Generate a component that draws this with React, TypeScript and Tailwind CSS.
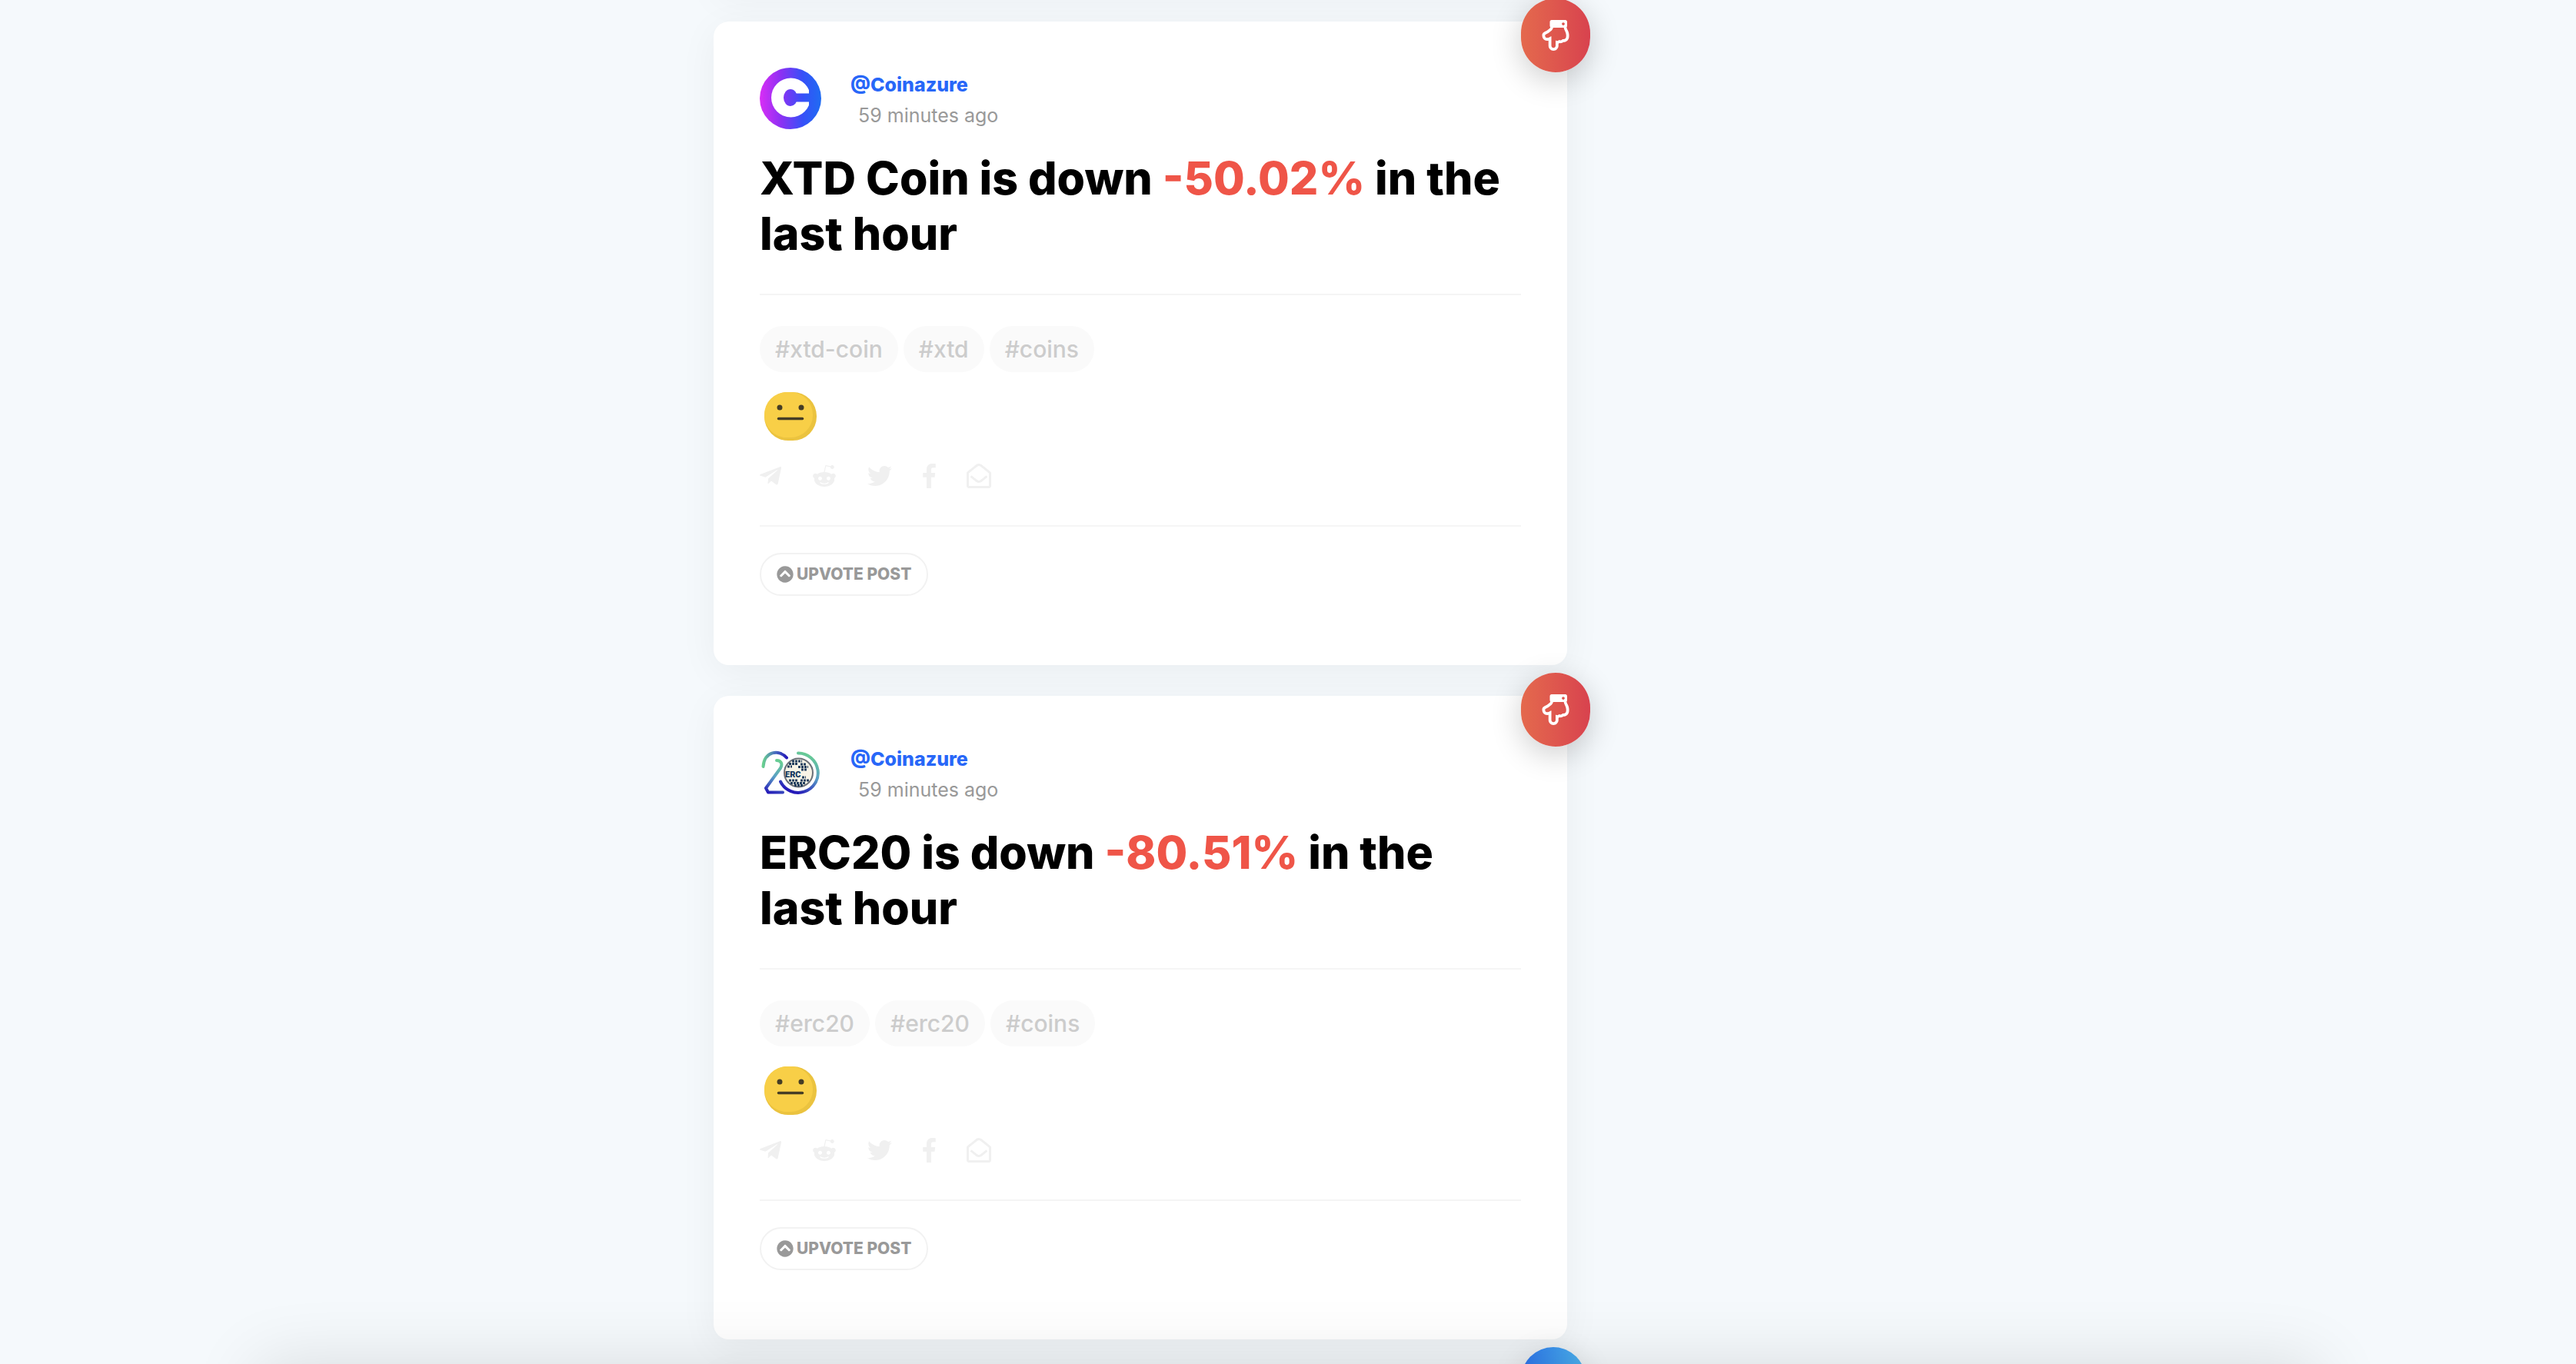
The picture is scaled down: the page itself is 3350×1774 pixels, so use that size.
import { FaChevronCircleUp, FaRedditAlien, FaRegEnvelopeOpen, FaRegHandPointDown, FaTelegramPlane, FaTwitter } from "react-icons/fa";

interface Post {
  id: number;
  coin: string;
  change: string;
  tags: string[];
  logo: "xtd" | "erc20";
}

const posts: Post[] = [
  { id: 1, coin: "XTD Coin", change: "-50.02%", tags: ["#xtd-coin", "#xtd", "#coins"], logo: "xtd" },
  { id: 2, coin: "ERC20", change: "-80.51%", tags: ["#erc20", "#erc20", "#coins"], logo: "erc20" },
];

function XtdLogo() {
  return (
    <svg className="size-20" viewBox="0 0 80 80" aria-hidden="true">
      <defs>
        <linearGradient id="xtd" gradientUnits="userSpaceOnUse" x1="0" y1="0" x2="80" y2="0">
          <stop offset="0" stopColor="#d92ef5" />
          <stop offset="0.35" stopColor="#8b31f3" />
          <stop offset="0.7" stopColor="#3650f8" />
          <stop offset="1" stopColor="#1f6cf2" />
        </linearGradient>
      </defs>
      <circle cx="40" cy="40" r="40" fill="url(#xtd)" />
      <circle cx="40.500" cy="39" r="25.500" fill="#fff" />
      <ellipse cx="40" cy="39" rx="9" ry="11" fill="url(#xtd)" />
      <rect x="45" y="33.500" width="22" height="11" fill="url(#xtd)" />
      <rect x="64" y="20" width="4" height="38" fill="url(#xtd)" />
    </svg>
  );
}

function Erc20Logo() {
  return (
    <svg className="size-20" viewBox="0 0 80 80" fill="none" aria-hidden="true">
      <defs>
        <linearGradient id="ercArc" x1="0" y1="0" x2="1" y2="0">
          <stop offset="0" stopColor="#69cf90" />
          <stop offset="0.5" stopColor="#4a6fc0" />
          <stop offset="1" stopColor="#2418b8" />
        </linearGradient>
        <linearGradient id="ercStem" gradientUnits="userSpaceOnUse" x1="26" y1="24" x2="10" y2="66">
          <stop offset="0" stopColor="#69cf90" />
          <stop offset="0.5" stopColor="#5a9fc6" />
          <stop offset="1" stopColor="#2418b8" />
        </linearGradient>
        <linearGradient id="ercRing" gradientUnits="userSpaceOnUse" x1="66" y1="15" x2="46" y2="66">
          <stop offset="0" stopColor="#69cf90" />
          <stop offset="0.5" stopColor="#5a9fc6" />
          <stop offset="1" stopColor="#2418b8" />
        </linearGradient>
      </defs>
      <path d="M4.500 32C6 12 25 9 35 20.500" stroke="url(#ercArc)" strokeWidth="4" strokeLinecap="round" />
      <path d="M22 24c6 0 8 5 5 10L8 60l3 5.500h19" stroke="url(#ercStem)" strokeWidth="4" strokeLinecap="round" strokeLinejoin="round" />
      <path d="M50 14.500A25.700 25.700 0 1 1 27 51.500" stroke="url(#ercRing)" strokeWidth="4" strokeLinecap="round" />
      {/* Globe with dotted continents */}
      <circle cx="50.500" cy="40" r="18.500" fill="#f8f4e6" stroke="#6b7078" strokeWidth="2" />
      <g stroke="#24405f" strokeWidth="3" strokeDasharray="3 1">
        <path d="M42 25h13M38 28.500h11M53 29h8M36 32h6M50 32.500h13M54 36h7" />
        <path d="M55 46h5M38 50h12M53 50h11M40 53.500h20M45 56.500h12" />
      </g>
      <text x="33" y="46" fontSize="11" fontWeight="900" fill="#12365c" fontFamily="Roboto, sans-serif">
        ERC
      </text>
    </svg>
  );
}

function NeutralFace() {
  return (
    <svg className="h-[63px] w-[68px]" viewBox="0 0 68 63" aria-hidden="true">
      <rect width="68" height="63" rx="31" fill="#ebc33f" />
      <rect width="63" height="59" rx="29" fill="#f8cf47" />
      <circle cx="20" cy="20" r="3.500" fill="#453d25" />
      <circle cx="48" cy="20" r="3.500" fill="#453d25" />
      <path d="M18.500 34.500h31" stroke="#453d25" strokeWidth="3.500" strokeLinecap="round" />
    </svg>
  );
}

function FacebookIcon() {
  return (
    <svg className="h-8 w-[17px]" viewBox="0 0 264 512" fill="currentColor" aria-hidden="true">
      <path d="M215.800 85H264V3.600C255.700 2.500 227.100 0 193.800 0 124.300 0 76.700 42.400 76.700 120.300V192H0v91h76.700v229h94V283h73.600l11.700-91h-85.300v-62.700c0-26.300 7.300-44.300 45.100-44.300z" />
    </svg>
  );
}

function PostCard({ post }: { post: Post }) {
  return (
    <article className="relative rounded-[20px] bg-white px-[60px] pt-[60px] pb-[90px] shadow-[0_10px_50px_rgba(10,10,20,0.05)]">
      {/* Trend badge */}
      <div className="absolute -top-[30px] -right-[30px] flex h-24 w-[90px] items-center justify-center rounded-[45px] bg-linear-to-r from-[#e4694d] to-[#d8424e] text-[40px] text-white shadow-[0_10px_40px_rgba(0,0,0,0.2)]">
        <FaRegHandPointDown />
      </div>

      <header className="flex h-20 gap-[38px]">
        {post.logo === "xtd" ? <XtdLogo /> : <Erc20Logo />}
        <div className="flex flex-col pt-0.5">
          <a href="#coinazure" className="text-[25px] leading-[40px] font-extrabold text-[#2867f8]">
            @Coinazure
          </a>
          <time className="pl-[10px] text-[25px] leading-[40px] text-[#999]">59 minutes ago</time>
        </div>
      </header>

      <h2 className="mt-7 text-[59px] leading-[72px] font-extrabold text-black">
        {post.coin} is down <span className="text-[#ef5548]">{post.change}</span> in the
        <br />
        last hour
      </h2>

      <hr className="mt-[42px] border-t-2 border-[#f5f5f5]" />

      <ul className="mt-10 flex gap-[7px]">
        {post.tags.map((tag, i) => (
          <li key={i}>
            <a href="#tag" className="block rounded-full bg-[#fafafa] px-5 text-[30px] leading-[60px] font-medium text-[#ccc]">
              {tag}
            </a>
          </li>
        ))}
      </ul>

      <div className="mt-[26px] pl-1.5">
        <NeutralFace />
      </div>

      <nav className="mt-[30px] flex gap-10 text-[32px] text-[#f0f0f0]">
        <a href="#telegram" aria-label="Telegram"><FaTelegramPlane className="w-7" /></a>
        <a href="#reddit" aria-label="Reddit"><FaRedditAlien /></a>
        <a href="#twitter" aria-label="Twitter"><FaTwitter /></a>
        <a href="#facebook" aria-label="Facebook"><FacebookIcon /></a>
        <a href="#email" aria-label="Email"><FaRegEnvelopeOpen /></a>
      </nav>

      <hr className="mt-12 border-t-2 border-[#f5f5f5]" />

      <button className="mt-[34px] flex h-14 items-center gap-1 rounded-full border-2 border-[#f2f2f2] px-5 text-[21px] font-extrabold text-[#999]">
        <FaChevronCircleUp className="size-[22px]" />
        UPVOTE POST
      </button>
    </article>
  );
}

export default function App() {
  return (
    <div className="h-screen overflow-hidden bg-[#f5f9fc] font-['Inter',sans-serif]">
      <div className="mx-auto grid w-4/5 grid-cols-[593fr_1110fr_977fr]">
        <main className="col-start-2 -mt-[52px] flex flex-col gap-10">
          {/* Tail of the previous post */}
          <div className="h-10 rounded-[20px] bg-white shadow-[0_10px_50px_rgba(10,10,20,0.05)]" />
          {posts.map((post) => (
            <PostCard key={post.id} post={post} />
          ))}
          {/* Next post, below the fold */}
          <div className="relative h-40 rounded-[20px] bg-white shadow-[0_10px_50px_rgba(10,10,20,0.05)]">
            <div className="absolute -top-[30px] -right-6 h-24 w-[84px] rounded-[42px] bg-linear-to-r from-[#2e72ea] to-[#4fb4ee] shadow-[0_10px_40px_rgba(0,0,0,0.15)]" />
          </div>
        </main>
      </div>

      {/* Shadow of the docked bar */}
      <div className="pointer-events-none fixed top-full left-1/10 h-40 w-4/5 shadow-[0_0_90px_rgba(0,0,0,0.12)]" />
    </div>
  );
}
